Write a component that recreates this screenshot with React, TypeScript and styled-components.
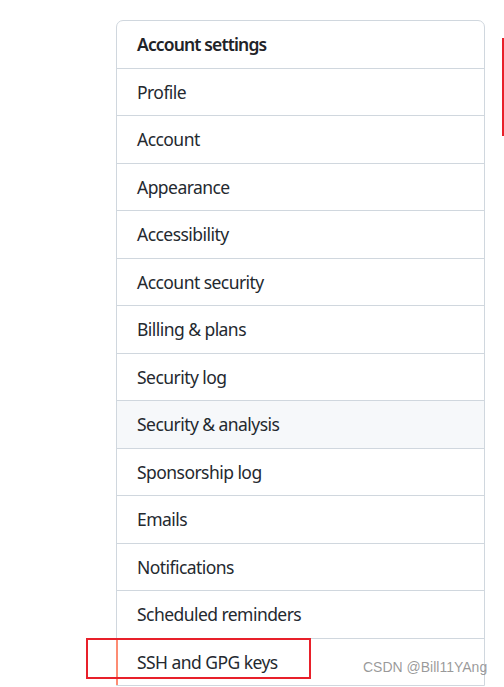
import React from "react";
import styled, { createGlobalStyle } from "styled-components";

const Global = createGlobalStyle`
  html, body {
    margin: 0;
    padding: 0;
    background: #ffffff;
    overflow: hidden;
  }
  body {
    font-family: "Noto Sans", "Segoe UI", sans-serif;
  }
`;

const Page = styled.div`
  position: relative;
  width: 504px;
  height: 687px;
  overflow: hidden;
  padding: 20px 0 0 116px;
  box-sizing: border-box;
`;

const Menu = styled.nav`
  width: 369px;
  box-sizing: border-box;
  border: 1px solid #d0d7de;
  border-radius: 7px 7px 0 0;
  background: #ffffff;
  display: flex;
  flex-direction: column;
`;

const Heading = styled.div`
  height: 46.5px;
  display: flex;
  align-items: center;
  padding: 0 20px;
  font-size: 17.5px;
  font-weight: 600;
  letter-spacing: -0.85px;
  color: #1f2328;
`;

const Item = styled.a<{ $hover?: boolean; $selected?: boolean }>`
  position: relative;
  height: 46.5px;
  display: flex;
  align-items: center;
  padding: 0 20px;
  border-top: 1px solid #d0d7de;
  font-size: 17.5px;
  letter-spacing: -0.55px;
  color: #24292f;
  text-decoration: none;
  background: ${(p) => (p.$hover ? "#f6f8fa" : "#ffffff")};
  &::before {
    content: "";
    display: ${(p) => (p.$selected ? "block" : "none")};
    position: absolute;
    left: -1px;
    top: 0;
    bottom: 0;
    width: 2px;
    background: #fd8c73;
  }
`;

const RedLine = styled.div`
  position: absolute;
  left: 502px;
  top: 38px;
  width: 2px;
  height: 98px;
  background: #e8202a;
`;

const RedBox = styled.div`
  position: absolute;
  left: 86px;
  top: 638px;
  width: 225px;
  height: 41px;
  box-sizing: border-box;
  border: 2px solid #e8202a;
`;

const Watermark = styled.div`
  position: absolute;
  left: 363px;
  top: 659px;
  font-family: "Liberation Sans", Arial, sans-serif;
  font-size: 14px;
  color: rgba(120, 120, 120, 0.75);
  white-space: nowrap;
`;

const items = [
  "Profile",
  "Account",
  "Appearance",
  "Accessibility",
  "Account security",
  "Billing & plans",
  "Security log",
  "Security & analysis",
  "Sponsorship log",
  "Emails",
  "Notifications",
  "Scheduled reminders",
  "SSH and GPG keys",
];

export default function App() {
  return (
    <>
      <Global />
      <Page>
        <Menu>
          <Heading>Account settings</Heading>
          {items.map((label) => (
            <Item
              key={label}
              $hover={label === "Security & analysis"}
              $selected={label === "SSH and GPG keys"}
            >
              {label}
            </Item>
          ))}
        </Menu>
        <RedLine />
        <RedBox />
        <Watermark>CSDN @Bill11YAng</Watermark>
      </Page>
    </>
  );
}
